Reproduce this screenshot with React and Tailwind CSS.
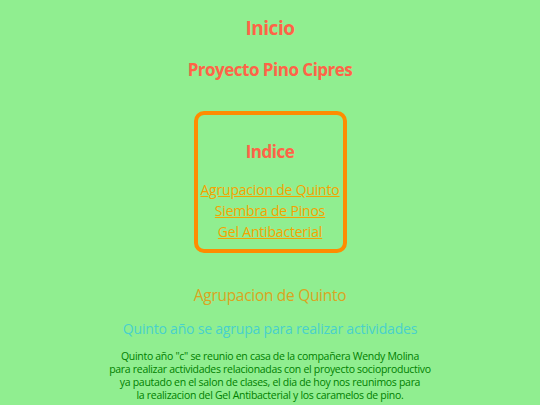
export default function App() {
  return (
    <div className="min-h-[405px] w-full bg-[#90ee90] flex flex-col items-center text-center font-['Open_Sans',sans-serif] overflow-hidden">
      <h1 className="mt-[16px] text-[19px] leading-[24px] font-bold text-[#ff6347] tracking-[-0.5px]">Inicio</h1>
      <h2 className="mt-[18px] text-[17px] leading-[24px] font-bold text-[#ff6347] tracking-[-0.5px]">Proyecto Pino Cipres</h2>
      <div className="mt-[29px] w-[153px] h-[142px] border-[4px] border-[#ff8c00] rounded-[10px] flex flex-col items-center">
        <h3 className="mt-[25px] text-[17px] leading-[24px] font-bold text-[#ff6347] tracking-[-0.5px]">Indice</h3>
        <nav className="mt-[15px] flex flex-col items-center text-[14px] leading-[21px] text-[#f5a300] tracking-[-0.2px]">
          <a href="#agrupacion" className="underline">Agrupacion de Quinto</a>
          <a href="#siembra" className="underline">Siembra de Pinos</a>
          <a href="#gel" className="underline">Gel Antibacterial</a>
        </nav>
      </div>
      <h4 className="mt-[32px] text-[15.5px] leading-[20px] text-[#daa520] tracking-[-0.3px]">Agrupacion de Quinto</h4>
      <p className="mt-[14px] text-[14px] leading-[20px] text-[#48d1cc] tracking-[-0.2px]">Quinto año se agrupa para realizar actividades</p>
      <p className="mt-[11px] text-[10.5px] leading-[13px] text-[#008000] tracking-[-0.3px]">
        Quinto año "c" se reunio en casa de la compañera Wendy Molina<br />
        para realizar actividades relacionadas con el proyecto socioproductivo<br />
        ya pautado en el salon de clases, el dia de hoy nos reunimos para<br />
        la realizacion del Gel Antibacterial y los caramelos de pino.
      </p>
    </div>
  );
}
